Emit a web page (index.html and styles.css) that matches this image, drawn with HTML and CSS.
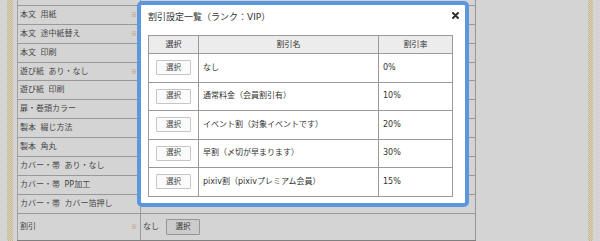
FILE: index.html
```html
<!DOCTYPE html>
<html lang="ja">
<head>
    <meta charset="UTF-8">
    <title>割引設定</title>
    <link rel="stylesheet" href="styles.css">
</head>
<body>
    <div class="page">
        <div class="dots"></div>
        <table class="spec">
            <tr><th></th><td></td></tr>
            <tr><th>本文 用紙<span class="req">※</span></th><td></td></tr>
            <tr><th>本文 途中紙替え<span class="req">※</span></th><td></td></tr>
            <tr><th>本文 印刷</th><td></td></tr>
            <tr><th>遊び紙 あり・なし<span class="req">※</span></th><td></td></tr>
            <tr><th>遊び紙 印刷</th><td></td></tr>
            <tr><th>扉・巻頭カラー</th><td></td></tr>
            <tr><th>製本 綴じ方法</th><td></td></tr>
            <tr><th>製本 角丸</th><td></td></tr>
            <tr><th>カバー・帯 あり・なし</th><td></td></tr>
            <tr><th>カバー・帯 PP加工</th><td></td></tr>
            <tr><th>カバー・帯 カバー箔押し</th><td></td></tr>
            <tr class="discount">
                <th>割引<span class="req">※</span></th>
                <td>なし<button class="page-btn">選択</button></td>
            </tr>
            <tr><th></th><td></td></tr>
        </table>
        <div class="spacer"></div>
        <div class="dots dots-right"></div>
        <div class="edge"></div>
    </div>

    <!-- discount dialog -->
    <div class="overlay"></div>
    <div class="modal">
        <h2 class="modal-title">割引設定一覧（ランク：VIP）</h2>
        <button class="close" title="閉じる">
            <svg width="7" height="7" viewBox="0 0 7 7">
                <path d="M1 1L6 6M6 1L1 6" stroke="#2b2b2b" stroke-width="1.9" stroke-linecap="round"/>
            </svg>
        </button>
        <table class="discount-list">
            <tr>
                <th class="col-select">選択</th>
                <th class="col-name">割引名</th>
                <th class="col-rate">割引率</th>
            </tr>
            <tr><td class="col-select"><button class="pick">選択</button></td><td>なし</td><td>0%</td></tr>
            <tr><td class="col-select"><button class="pick">選択</button></td><td>通常料金（会員割引有）</td><td>10%</td></tr>
            <tr><td class="col-select"><button class="pick">選択</button></td><td>イベント割（対象イベントです）</td><td>20%</td></tr>
            <tr><td class="col-select"><button class="pick">選択</button></td><td>早割（〆切が早まります）</td><td>30%</td></tr>
            <tr><td class="col-select"><button class="pick">選択</button></td><td>pixiv割（pixivプレミアム会員）</td><td>15%</td></tr>
        </table>
    </div>
</body>
</html>
```

FILE: styles.css
```css
body {
    margin: 0;
    background: #fff;
    color: #555;
    font-family: "DejaVu Sans", "Noto Sans CJK JP", sans-serif;
    font-size: 8px;
    overflow: hidden;
}

/* Page behind the dialog */
.page {
    display: flex;
    height: 241px;
    overflow: hidden;
}

.dots {
    width: 6px;
    margin: 0 4px 0 7px;
    background-image: repeating-conic-gradient(#f2dc94 0 25%, transparent 0 50%);
    background-size: 2px 2px;
}

.dots-right {
    width: 5px;
    margin: 0 4px 0 0;
}

.spacer {
    flex: 1;
}

.edge {
    width: 1px;
    margin-right: 2px;
    background: #fafafa;
}

.spec {
    border-collapse: collapse;
    width: 459px;
    margin-top: -13px;
    align-self: flex-start;
    border-left: 1px solid #c4c4c4;
    border-right: 1px solid #b5b5b5;
}

.spec th,
.spec td {
    height: 17.9px;
    padding: 0 0 0 2px;
    border-bottom: 1px solid #b8b8b8;
    text-align: left;
    font-weight: normal;
    vertical-align: middle;
    line-height: 12px;
}

.spec th {
    width: 117px;
    padding-right: 3px;
    border-right: 1px solid #b8b8b8;
    word-spacing: 2px;
}

.req {
    float: right;
    color: #eaa574;
    font-family: "Noto Sans CJK JP", sans-serif;
    font-size: 6px;
    line-height: 12px;
}

.discount th,
.discount td {
    height: 26.5px;
    border-top: 1px solid #8e8e8e;
    border-bottom: 1px solid #9a9a9a;
}

.page-btn {
    font: inherit;
    font-size: 7.5px;
    color: #444;
    width: 34px;
    height: 16px;
    margin-left: 7px;
    padding: 0;
    background: #f6f6f6;
    border: 1px solid #b4b4b4;
    border-radius: 1px;
}

/* Dialog */
.overlay {
    position: fixed;
    inset: 0;
    background: rgba(0, 0, 0, 0.17);
}

.modal {
    position: absolute;
    left: 137px;
    top: 1px;
    width: 332px;
    height: 206px;
    box-sizing: border-box;
    padding: 6px 12px 0 7px;
    background: #fff;
    border: 4px solid #5b97de;
    border-radius: 5px;
    color: #333;
}

.modal-title {
    margin: 0;
    font-size: 9px;
    font-weight: normal;
    line-height: 13px;
}

.close {
    position: absolute;
    top: 7px;
    right: 6px;
    padding: 0;
    border: none;
    background: none;
    line-height: 0;
}

.discount-list {
    width: 305px;
    margin-top: 11px;
    border-collapse: collapse;
    border: 1px solid #8c8c8c;
}

.discount-list th,
.discount-list td {
    border: 1px solid #9a9a9a;
    padding: 0 0 0 4px;
    text-align: left;
    vertical-align: middle;
    line-height: 12px;
}

.discount-list th {
    height: 17px;
    background: #ececec;
    font-weight: normal;
    text-align: center;
    padding: 0;
}

.discount-list td {
    height: 27.5px;
}

.discount-list .col-select {
    width: 49px;
    padding: 0;
    text-align: center;
}

.discount-list .col-name {
    width: 179px;
}

.pick {
    font: inherit;
    font-size: 7.5px;
    color: #444;
    width: 35px;
    height: 15px;
    padding: 0;
    background: #fbfbfb;
    border: 1px solid #c6c6c6;
    border-radius: 1px;
}
```
